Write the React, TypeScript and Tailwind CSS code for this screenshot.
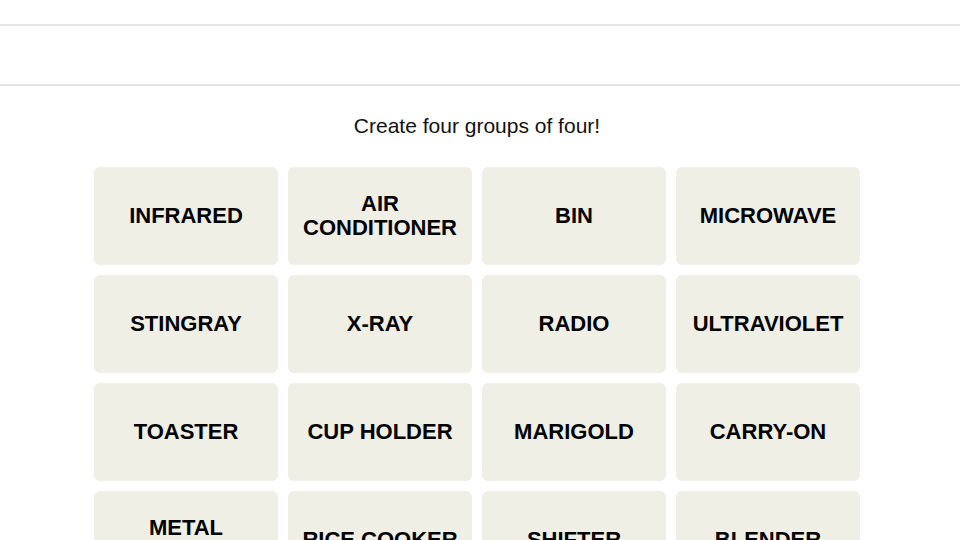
const words = [
  ["INFRARED", "AIR CONDITIONER", "BIN", "MICROWAVE"],
  ["STINGRAY", "X-RAY", "RADIO", "ULTRAVIOLET"],
  ["TOASTER", "CUP HOLDER", "MARIGOLD", "CARRY-ON"],
  ["METAL DETECTOR", "RICE COOKER", "SHIFTER", "BLENDER"],
]

function Tile({ word }: { word: string }) {
  const lines = word === "AIR CONDITIONER" || word === "METAL DETECTOR" ? word.split(" ") : [word]
  return (
    <button className="h-[98px] rounded-[6px] bg-[#efefe6] flex flex-col items-center justify-center text-[22px] leading-6 font-bold text-black text-center">
      {lines.map((l) => (
        <span key={l}>{l}</span>
      ))}
    </button>
  )
}

export default function App() {
  return (
    <div className="w-[960px] h-[540px] overflow-hidden bg-white font-['Liberation_Sans',Arial,sans-serif]">
      <div className="h-[26px] border-b-2 border-[#e6e6e6]" />
      <div className="h-[60px] border-b-2 border-[#e3e3e3]" />
      <p className="mt-[24px] text-center text-[21px] text-[#121212] ml-[-6px]">Create four groups of four!</p>
      <div className="ml-[94px] mt-[25px] w-[766px] grid grid-cols-4 gap-[10px]">
        {words.flat().map((w) => (
          <Tile key={w} word={w} />
        ))}
      </div>
    </div>
  )
}
